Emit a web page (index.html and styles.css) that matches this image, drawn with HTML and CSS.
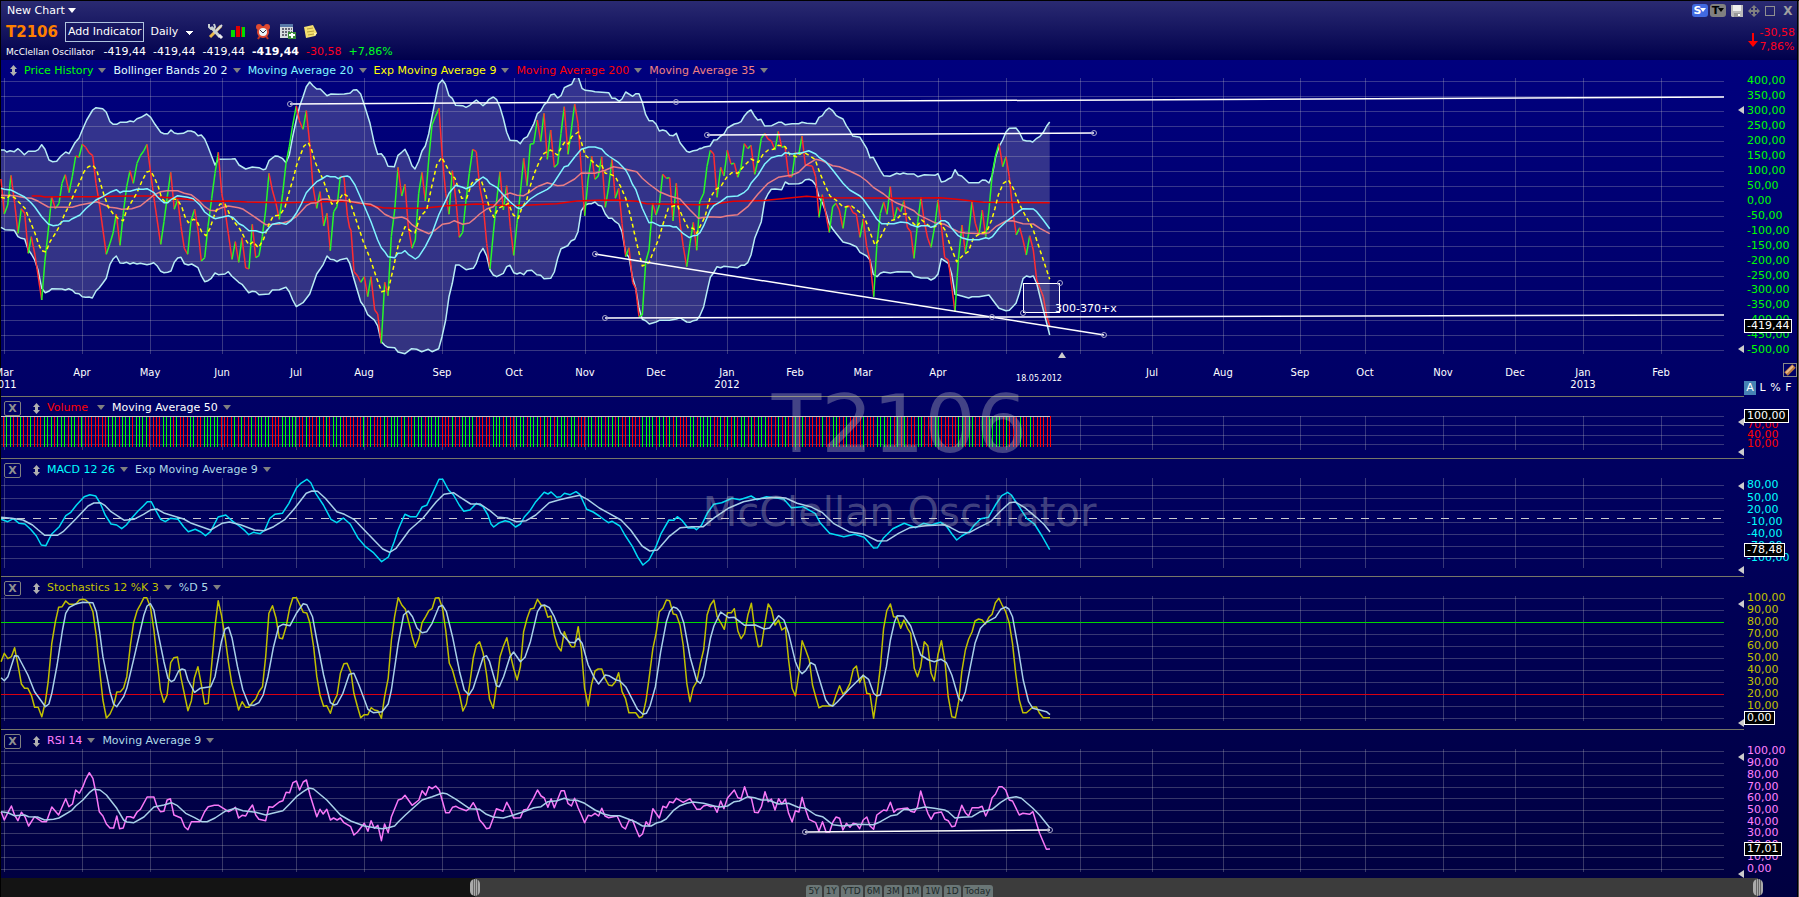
FILE: index.html
```html
<!DOCTYPE html>
<html lang="en">

<head>
    <meta charset="UTF-8">
    <meta name="viewport" content="width=device-width, initial-scale=1.0">
    <title>T2106 - McClellan Oscillator</title>
    <link rel="stylesheet" href="styles.css">
</head>

<body>
    <!-- top bar -->
    <header class="topbar">
        <div class="topbar-left">
            <button class="menu" type="button">New Chart <i class="caret light"></i></button>
            <div class="toolbar">
                <strong class="symbol">T2106</strong>
                <button class="add" type="button">Add Indicator</button>
                <select class="period" aria-label="Period">
                    <option>Daily</option>
                    <option>Weekly</option>
                </select>
                <button class="tool" type="button" aria-label="Settings">
                    <svg width="17" height="17"><path d="M3 14L14 3" stroke="#e8b84a" stroke-width="3"/><path d="M7 10L15 2" stroke="#d8dcdc" stroke-width="2"/><path d="M4 4l9 10" stroke="#c8d0d0" stroke-width="3"/><path d="M2 1v3l2 2h3l1-2-1-3" fill="none" stroke="#c8d0d0" stroke-width="2"/><path d="M12 12l3 3" stroke="#eee" stroke-width="3"/></svg>
                </button>
                <button class="tool" type="button" aria-label="Chart type">
                    <svg width="15" height="15"><path d="M0 6h4v7H0z" fill="#0d0"/><path d="M5 2h4v11H5z" fill="#e00000"/><path d="M10 3h4v10h-4z" fill="#0d0"/><path d="M10 3h1v10h-1z" fill="#e00000"/></svg>
                </button>
                <button class="tool" type="button" aria-label="Alarm">
                    <svg width="16" height="16"><circle cx="4" cy="3" r="3" fill="#e04a30"/><circle cx="12" cy="3" r="3" fill="#e04a30"/><path d="M3 15l2-3M13 15l-2-3" stroke="#c03020" stroke-width="2"/><circle cx="8" cy="8" r="5" fill="#e8f4f8" stroke="#e04a30" stroke-width="2"/><path d="M5 6l3 3 3-3" fill="none" stroke="#334"/></svg>
                </button>
                <button class="tool" type="button" aria-label="Add table">
                    <svg width="18" height="17"><path d="M1 1h13v14H1z" fill="#d8dce0"/><path d="M1 1h13v3H1z" fill="#5878a8"/><path d="M3 6h10M3 9h10M3 12h10" stroke="#667" stroke-width="2" stroke-dasharray="2 1"/><path d="M9 9h8v7H9z" fill="#3a8a3a"/><path d="M13 10v5M10 12h6" stroke="#fff" stroke-width="2"/></svg>
                </button>
                <button class="tool" type="button" aria-label="Notes">
                    <svg width="15" height="15"><path d="M1 3l9-2 4 8-2 3-9 2z" fill="#f4e070"/><path d="M4 5l6-1M4 8l7-1M5 11l6-1" stroke="#b8a040"/><path d="M14 9l-3 0 1 3z" fill="#fff6b0"/></svg>
                </button>
            </div>
            <div class="quotes">
                <span class="name">McClellan Oscillator</span>
                <span>-419,44</span>
                <span>-419,44</span>
                <span>-419,44</span>
                <b>-419,44</b>
                <span class="red">-30,58</span>
                <span class="green">+7,86%</span>
            </div>
        </div>
        <div class="topbar-right">
            <div class="window-tools">
                <button class="badge blue" type="button">S<i class="caret"></i></button>
                <button class="badge gray" type="button">T<i class="caret"></i></button>
                <button type="button" aria-label="Save"><svg width="12" height="12"><path d="M0 0h12v12H1l-1-1z" fill="#bbb"/><path d="M2 0h8v6H2z" fill="#eee"/><path d="M3 8h6v4H3z" fill="#999"/><path d="M7 9h2v2H7z" fill="#fff"/></svg></button>
                <button type="button" aria-label="Move"><svg width="12" height="12"><path d="M6 1v10M1 6h10" stroke="#808080" stroke-width="2"/><path d="M6 0l3 3H3zM6 12l3-3H3zM0 6l3-3v6zM12 6l-3-3v6z" fill="#808080"/></svg></button>
                <button type="button" aria-label="Maximize"><svg width="10" height="10"><rect x=".5" y=".5" width="9" height="9" fill="none" stroke="#909090"/></svg></button>
                <button class="close" type="button" aria-label="Close">X</button>
            </div>
            <div class="change red">
                <svg width="10" height="14"><path d="M5 0v9" stroke="#f00" stroke-width="2"/><path d="M0 8h10l-5 6z" fill="#f00"/></svg>
                <span>-30,58<br>7,86%</span>
            </div>
        </div>
    </header>

    <!-- chart panels -->
    <main class="panels">
        <div class="watermark">
            <span class="watermark-symbol">T2106</span>
            <span class="watermark-name">McClellan Oscillator</span>
        </div>

        <section class="panel">
            <div class="pane">
                <div class="legend main-legend">
                    <svg class="grip" width="9" height="11"><use href="#grip"/></svg>
                    <button class="c-price" type="button">Price History<i class="caret"></i></button>
                    <button class="c-band" type="button">Bollinger Bands 20 2<i class="caret"></i></button>
                    <button class="c-ma20" type="button">Moving Average 20<i class="caret"></i></button>
                    <button class="c-ema" type="button">Exp Moving Average 9<i class="caret"></i></button>
                    <button class="c-ma200" type="button">Moving Average 200<i class="caret"></i></button>
                    <button class="c-ma35" type="button">Moving Average 35<i class="caret"></i></button>
                </div>
                <svg class="plot plot-main" id="price"></svg>
            </div>
            <div class="axis c-price">
                <svg class="scale scale-main" id="price-scale"></svg>
                <output class="tag tag-price">-419,44</output>
                <button class="draw" type="button" aria-label="Draw"><svg width="12" height="12"><path d="M2 10L10 2" stroke="#b87840" stroke-width="5"/><path d="M2 9L9 2" stroke="#e8b888" stroke-width="2"/></svg></button>
                <div class="modes">
                    <button class="on" type="button">A</button>
                    <button type="button">L</button>
                    <button type="button">%</button>
                    <button type="button">F</button>
                </div>
            </div>
        </section>

        <section class="panel">
            <div class="pane">
                <div class="legend">
                    <button class="remove" type="button" aria-label="Remove volume">X</button>
                    <svg class="grip" width="9" height="11"><use href="#grip"/></svg>
                    <button class="c-volume wide" type="button">Volume<i class="caret"></i></button>
                    <button class="c-white" type="button">Moving Average 50<i class="caret"></i></button>
                </div>
                <svg class="plot plot-volume" id="volume"></svg>
            </div>
            <div class="axis c-volume">
                <svg class="scale" id="volume-scale"></svg>
                <output class="tag tag-volume">100,00</output>
            </div>
        </section>

        <section class="panel">
            <div class="pane">
                <div class="legend">
                    <button class="remove" type="button" aria-label="Remove MACD">X</button>
                    <svg class="grip" width="9" height="11"><use href="#grip"/></svg>
                    <button class="c-macd" type="button">MACD 12 26<i class="caret"></i></button>
                    <button class="c-signal" type="button">Exp Moving Average 9<i class="caret"></i></button>
                </div>
                <svg class="plot plot-macd" id="macd"></svg>
            </div>
            <div class="axis c-macd">
                <svg class="scale" id="macd-scale"></svg>
                <output class="tag tag-macd">-78,48</output>
            </div>
        </section>

        <section class="panel">
            <div class="pane">
                <div class="legend">
                    <button class="remove" type="button" aria-label="Remove stochastics">X</button>
                    <svg class="grip" width="9" height="11"><use href="#grip"/></svg>
                    <button class="c-stoch" type="button">Stochastics 12 %K 3<i class="caret"></i></button>
                    <button class="c-signal" type="button">%D 5<i class="caret"></i></button>
                </div>
                <svg class="plot plot-stoch" id="stoch"></svg>
            </div>
            <div class="axis c-stoch">
                <svg class="scale" id="stoch-scale"></svg>
                <output class="tag tag-stoch">0,00</output>
            </div>
        </section>

        <section class="panel">
            <div class="pane last">
                <div class="legend">
                    <button class="remove" type="button" aria-label="Remove RSI">X</button>
                    <svg class="grip" width="9" height="11"><use href="#grip"/></svg>
                    <button class="c-rsi" type="button">RSI 14<i class="caret"></i></button>
                    <button class="c-signal" type="button">Moving Average 9<i class="caret"></i></button>
                </div>
                <svg class="plot plot-rsi" id="rsi"></svg>
            </div>
            <div class="axis c-rsi">
                <svg class="scale" id="rsi-scale"></svg>
                <output class="tag tag-rsi">17,01</output>
            </div>
        </section>
    </main>

    <!-- time range -->
    <footer class="timeline">
        <div class="range">
            <button class="thumb" type="button" aria-label="Range start"></button>
            <button class="thumb end" type="button" aria-label="Range end"></button>
        </div>
        <nav class="spans">
            <button type="button">5Y</button>
            <button type="button">1Y</button>
            <button type="button">YTD</button>
            <button type="button">6M</button>
            <button type="button">3M</button>
            <button type="button">1M</button>
            <button type="button">1W</button>
            <button type="button">1D</button>
            <button type="button">Today</button>
        </nav>
    </footer>

    <svg class="symbols" width="0" height="0">
        <symbol id="grip" viewBox="0 0 9 11"><path d="M4.5 0L8 4H6v3h2L4.5 11 1 7h2V4H1z" fill="#b0b0b0"/></symbol>
    </svg>
    <script src="chart.js"></script>
</body>

</html>
```

FILE: styles.css
```css
* {
    box-sizing: border-box;
}

body {
    margin: 0;
    min-height: 100vh;
    font-family: "DejaVu Sans", Verdana, sans-serif;
    font-size: 11px;
    line-height: 14px;
    color: #fff;
    background: linear-gradient(#00007e 60px, #000040 100%);
    border-top: 1px solid #000;
    box-shadow: inset 1px 0 #000, inset -1px 0 #555, inset -2px 0 #000;
}

button,
select {
    margin: 0;
    padding: 0;
    border: 0;
    background: none;
    color: inherit;
    font: inherit;
    white-space: nowrap;
    cursor: pointer;
}

svg {
    display: block;
}

.symbols {
    position: absolute;
}

.red {
    color: #ff0020;
}

.green {
    color: #00ff20;
}

/* small down arrow after a menu label */
.caret {
    display: inline-block;
    border: 4px solid transparent;
    border-top: 5px solid #808080;
    border-bottom: 0;
}

.caret.light {
    border-top-color: #fff;
    vertical-align: 1px;
}

/* top bar */
.topbar {
    display: flex;
    justify-content: space-between;
    height: 59px;
    margin: 0 2px 0 1px;
    padding: 0 0 0 5px;
    background: linear-gradient(#2a2a72, #00004c);
}

.topbar-left {
    display: flex;
    flex-direction: column;
    align-items: flex-start;
}

.menu {
    height: 19px;
    padding-left: 1px;
}

.toolbar {
    display: flex;
    align-items: center;
    height: 23px;
}

.symbol {
    width: 59px;
    font-size: 15px;
    color: #ff8000;
}

.add {
    height: 20px;
    padding: 0 2px;
    border: 1px solid #b0c4de;
}

.period {
    appearance: none;
    width: 46px;
    height: 18px;
    margin: 0 11px 0 6px;
    background: linear-gradient(to bottom right, #fff 50%, transparent 50%) 40px 8px / 4px 4px no-repeat,
        linear-gradient(to bottom left, #fff 50%, transparent 50%) 36px 8px / 4px 4px no-repeat;
}

.period option {
    background: #00004c;
}

.tool {
    width: 24px;
}

.quotes {
    display: flex;
    gap: 7px;
    align-items: center;
    height: 17px;
    padding-top: 1px;
}

.quotes .name {
    margin-right: 2px;
    font-size: 9px;
}

.topbar-right {
    display: flex;
    flex-direction: column;
    align-items: flex-end;
}

.window-tools {
    display: flex;
    align-items: center;
    gap: 5px;
    height: 19px;
    padding-right: 3px;
}

.badge {
    height: 13px;
    width: 16px;
    border-radius: 3px;
    font-weight: bold;
    line-height: 13px;
}

.badge + .badge {
    margin: 0 0 0 -3px;
}

.badge .caret {
    border-width: 4px 3px 0;
    border-top-color: currentColor;
    vertical-align: 2px;
    margin-left: -1px;
}

.badge.blue {
    background: #4169e1;
}

.badge.gray {
    background: #808080;
    color: #000;
}

.close {
    width: 12px;
    margin-left: 2px;
    font-size: 12px;
    font-weight: bold;
    color: #a0a0a0;
}

.change {
    display: flex;
    align-items: center;
    gap: 2px;
    padding: 6px 2px 0 0;
}

/* panels */
.panels {
    position: relative;
}

.panel {
    display: grid;
    grid-template-columns: 1fr 55px;
}

.pane {
    margin-left: 1px;
    border-bottom: 1px solid #777768;
}

.pane.last {
    border-bottom: 0;
}

.legend {
    display: flex;
    align-items: center;
    height: 19px;
    padding: 3px 0 0 3px;
}

.main-legend {
    height: 18px;
    padding: 3px 0 0 8px;
}

.legend button {
    margin-right: 7px;
}

.legend .caret {
    margin-left: 5px;
    vertical-align: 1px;
}

.legend .wide .caret {
    margin-left: 9px;
}

.legend .remove {
    width: 17px;
    height: 15px;
    margin-right: 11px;
    border: 1px solid #808080;
    border-radius: 2px;
    font-weight: bold;
    line-height: 13px;
    color: #909090;
}

.grip {
    margin-right: 6px;
}

/* the plots sit on the pane's left edge and leave a margin at the right */
.plot {
    width: calc(100% - 19px);
    margin-left: -1px;
}

.plot-main { height: 318px; }
.plot-volume { height: 42px; }
.plot-macd { height: 98px; }
.plot-stoch { height: 133px; }
.plot-rsi { height: 129px; }

.axis {
    position: relative;
}

/* labels may run below the box, so the pane alone sets the panel height */
.scale {
    width: 100%;
    height: 50px;
    overflow: visible;
}

.scale-main {
    height: 303px;
}

.scale text {
    fill: currentColor;
}

.scale path {
    fill: #ccc;
}

.tag {
    position: absolute;
    left: 0;
    height: 14px;
    padding: 0 2px;
    border: 1px solid #fff;
    background: #000;
    color: #fff;
    line-height: 12px;
}

.tag-price { top: 259px; }
.tag-volume { top: 12px; }
.tag-macd { top: 84px; }
.tag-stoch { top: 134px; }
.tag-rsi { top: 112px; }

.draw {
    display: block;
    width: 14px;
    height: 14px;
    margin-left: 39px;
    border: 1px solid #888;
}

.modes {
    display: flex;
    margin-top: 4px;
}

.modes button {
    min-width: 13px;
    height: 14px;
}

.modes .on {
    min-width: 12px;
    background: #4682b4;
}

.c-price { color: #00ff00; }
.c-band { color: #e0ffff; }
.c-ma20 { color: #80f8ff; }
.c-ema { color: #ffff00; }
.c-ma200 { color: #ff0000; }
.c-ma35 { color: #f08080; }
.c-volume { color: #ff0000; }
.c-white { color: #fff; }
.c-macd { color: #00ffff; }
.c-signal { color: #add8e6; }
.c-stoch { color: #c0c000; }
.c-rsi { color: #ff80ff; }
.modes, .draw { color: #fff; }

/* name of the symbol across the panels */
.watermark {
    position: absolute;
    top: 310px;
    left: 0;
    right: 0;
    display: flex;
    flex-direction: column;
    align-items: center;
    color: rgba(204, 204, 204, .33);
    pointer-events: none;
}

.watermark-symbol {
    font-size: 81px;
    line-height: 108px;
}

.watermark-name {
    font-size: 40px;
    line-height: 68px;
}

/* lines */
.grid { stroke: rgba(204, 204, 204, .27); }
.line { fill: none; stroke-width: 1.5; stroke-linejoin: round; }
.fill { fill: rgba(204, 204, 204, .25); }
.band { stroke: #b8ecf4; }
.ma20 { stroke: #80f4ff; }
.ema { stroke: #ffff00; stroke-dasharray: 4 3; }
.ma35 { stroke: #e87c84; }
.ma200 { stroke: #e80000; }
.up { stroke: #28f828; }
.down { stroke: #ff2c30; }
.bar-up { stroke: #00ff00; }
.bar-down { stroke: #ff0000; }
.volume-ma { stroke: #ccc; }
.macd { stroke: #00dcf4; }
.signal { stroke: #a8d0e8; }
.zero { stroke: #ccc; stroke-dasharray: 8 8; }
.stoch { stroke: #c0c000; }
.upper { stroke: #00d800; }
.lower { stroke: #d80010; }
.rsi { stroke: #f878f8; }
.trend { stroke: #fff; stroke-width: 1.5; }
.handle { fill: none; stroke: #aaaacc; }
.note { fill: rgba(204, 204, 204, .15); stroke: #fff; }
.plot text { fill: #fff; }
.month { font-size: 10px; text-anchor: middle; }
.date { font-size: 8px; text-anchor: middle; }
.marker { fill: #ccc; }

/* time range */
.timeline {
    position: relative;
    height: 19px;
    margin: 0 41px 0 1px;
    background: #141414;
}

.range {
    position: relative;
    height: 19px;
    margin-left: 27%;
    background: #3c3c3c;
}

.thumb {
    position: absolute;
    top: 1px;
    left: -5px;
    width: 10px;
    height: 17px;
    border-radius: 5px;
    background: linear-gradient(90deg, transparent 3px, #666 3px 4px, transparent 4px 5px, #666 5px 6px, transparent 6px 7px, #666 7px 8px, transparent 8px), #aaa;
}

.thumb.end {
    left: auto;
    right: -5px;
}

.spans {
    position: absolute;
    left: 0;
    right: -40px;
    bottom: 0;
    display: flex;
    justify-content: center;
    gap: 2px;
}

.spans button {
    height: 12px;
    padding: 0 2px;
    border-radius: 3px 3px 0 0;
    background: #6a7676;
    color: #1c2828;
    font-size: 9px;
    line-height: 12px;
}
```

FILE: chart.js
```js
var NS = 'http://www.w3.org/2000/svg';

// first day of each month on the time axis
var months = [
    [4, 'Mar', '2011'], [82, 'Apr'], [150, 'May'], [222, 'Jun'], [296, 'Jul'], [364, 'Aug'], [442, 'Sep'],
    [514, 'Oct'], [585, 'Nov'], [656, 'Dec'], [727, 'Jan', '2012'], [795, 'Feb'], [863, 'Mar'], [938, 'Apr'],
    [1006, ''], [1080, ''], [1152, 'Jul'], [1223, 'Aug'], [1300, 'Sep'], [1365, 'Oct'], [1443, 'Nov'],
    [1515, 'Dec'], [1583, 'Jan', '2013'], [1661, 'Feb']
];

// top: where the plot starts inside its panel, rows: grid lines in the plot, labels: one for each row
var panels = {
    price: {
        top: 18, from: 0, to: 276, arrows: [50, 289],
        rows: [3, 18, 33, 48, 63, 78, 93, 108, 123, 138, 153, 168, 183, 198, 212, 227, 242, 257, 272],
        labels: ['400,00', '350,00', '300,00', '250,00', '200,00', '150,00', '100,00', '50,00', '0,00', '-50,00', '-100,00',
            '-150,00', '-200,00', '-250,00', '-300,00', '-350,00', '-400,00', '-450,00', '-500,00']
    },
    volume: { top: 19, from: 0, to: 34, arrows: [25, 55], rows: [0, 9, 19, 28], labels: ['', '70,00', '40,00', '10,00'] },
    macd: {
        top: 19, from: 0, to: 90, arrows: [27, 111], rows: [7, 20, 32, 44, 56, 68, 80],
        labels: ['80,00', '50,00', '20,00', '-10,00', '-40,00', '-70,00', '-100,00']
    },
    stoch: {
        top: 19, from: 0, to: 125, arrows: [27, 146], rows: [2, 14, 26, 38, 50, 62, 74, 86, 98, 110, 122],
        labels: ['100,00', '90,00', '80,00', '70,00', '60,00', '50,00', '40,00', '30,00', '20,00', '10,00', '']
    },
    rsi: {
        top: 19, from: 0, to: 123, arrows: [27, 144], rows: [2, 14, 26, 38, 49, 61, 73, 84, 96, 108, 120],
        labels: ['100,00', '90,00', '80,00', '70,00', '60,00', '50,00', '40,00', '30,00', '20,00', '10,00', '0,00']
    }
};

function add(id, tag, cls, attrs, text) {
    var el = document.createElementNS(NS, tag);
    if (cls) el.setAttribute('class', cls);
    for (var key in attrs) el.setAttribute(key, attrs[key]);
    if (text) el.textContent = text;
    document.getElementById(id).appendChild(el);
}

// each part is [left, top, steps per pixel across, points], points have three steps per pixel down
function read(parts) {
    var out = [];
    parts.forEach(function (part) {
        part[3].trim().split(/\s+/).forEach(function (pair) {
            var p = pair.split(',');
            var x = part[0] + p[0] / part[2];
            if (out.length && x <= out[out.length - 1][0]) return;
            out.push([Math.round(x * 10) / 10, Math.round((part[1] + p[1] / 3) * 10) / 10]);
        });
    });
    return out;
}

function line(id, cls, points) {
    add(id, 'polyline', 'line ' + cls, { points: points.join(' ') });
}

function rule(id, cls, x1, y1, x2, y2) {
    add(id, 'line', cls, { x1: x1, y1: y1, x2: x2, y2: y2 });
}

function main3(a, b, c) {
    return read([[0, -8, 3, a], [350, -8, 3, b], [700, -8, 3, c]]);
}

// data
var price = main3(
    '3,327 13,432 23,405 33,316 44,400 54,490 64,416 74,430 85,550 94,500 105,555 125,690 135,570 145,480 155,380 166,416 177,400 186,340 196,314 207,368 217,320 227,258 237,262 247,223 257,232 267,248 278,257 288,340 298,400 319,553 330,520 339,490 349,432 360,526 370,430 380,350 390,302 400,340 411,280 421,257 431,243 441,223 452,310 462,385 482,523 492,455 502,380 512,307 523,418 533,388 543,470 553,535 563,553 573,452 584,418 594,480 604,573 614,563 624,470 635,385 645,310 655,247 665,370 675,420 685,490 696,568 706,515 716,577 726,503 737,594 747,596 757,463 767,563 777,557 787,500 797,420 807,310 817,360 828,400 838,448 848,370 858,280 868,230 878,165 889,108 898,152 909,178 919,122 929,220 939,350 950,415 960,365 971,468 981,430 991,542 1001,425 1011,410 1021,319 1032,322 1042,435 1049,475',
    '3,480 12,605 23,618 32,637 43,620 53,680 63,620 74,720 83,732 94,820 104,637 114,677 124,500 134,420 144,292 155,378 165,343 175,470 186,535 196,510 206,370 216,307 226,393 236,270 246,165 256,140 267,115 277,260 287,370 297,433 307,302 317,385 328,502 338,487 348,390 358,310 368,238 379,245 389,350 399,400 410,520 420,597 430,490 440,390 450,305 460,420 470,347 481,470 491,556 501,460 511,370 521,265 531,347 541,222 551,221 562,150 572,215 582,130 592,268 602,180 613,292 623,282 633,190 643,110 654,253 664,180 674,102 684,160 694,300 704,437 714,330 725,258 735,328 745,318 755,260 766,412 776,350 786,268 796,385 806,355 816,460 827,560 837,533 848,638 857,655 867,740 877,735 887,575 897,540 908,400 918,435 928,405 938,313 949,325 959,323 969,453 979,340 990,460 1000,530 1010,590 1020,520 1030,457 1040,541 1049,395',
    '11,370 21,290 31,241 41,252 51,382 62,292 72,318 82,241 93,282 103,280 113,322 123,293 133,221 143,236 153,226 164,313 174,270 184,205 194,190 204,207 214,213 225,240 235,184 245,232 255,229 266,320 276,320 286,247 296,255 306,198 316,285 337,288 347,320 357,442 367,374 377,430 388,487 398,410 408,400 418,420 429,475 439,408 449,408 459,428 469,432 480,502 490,447 500,530 510,570 521,680 531,520 541,430 551,397 561,433 571,350 582,450 592,412 602,425 612,392 622,472 632,485 642,565 653,455 663,382 673,455 683,505 693,532 704,470 714,390 724,465 734,563 745,570 765,725 775,570 786,465 796,548 806,490 816,394 826,460 837,495 847,420 857,500 867,420 877,310 887,255 897,221 908,290 918,260 928,320 938,420 949,495 959,473 969,510 979,555 989,497 1000,540 1010,630 1020,655 1030,680 1040,740 1049,768');

var bandTop = main3(
    '3,240 13,240 20,246 30,242 43,245 54,236 63,244 73,254 85,244 105,244 115,239 125,224 135,238 147,270 158,275 170,274 182,259 197,246 207,251 225,218 237,204 247,180 260,150 278,120 288,113 308,116 319,127 330,155 340,163 350,163 360,157 380,157 390,153 401,155 411,146 423,142 440,132 452,142 465,163 482,187 492,191 503,191 513,180 523,189 533,191 550,190 563,183 573,183 584,187 594,197 604,195 614,207 624,230 645,285 655,268 695,267 705,266 717,285 737,297 757,291 777,293 789,299 797,297 807,272 825,258 835,259 848,266 858,278 868,255 878,200 889,150 899,108 909,80 919,50 929,36 939,47 950,57 961,57 981,77 993,72 1013,73 1033,72 1047,70',
    '1,69 10,60 20,59 32,72 43,105 60,160 73,220 83,253 94,251 104,264 114,289 133,290 144,256 155,247 165,238 176,260 186,287 195,297 206,274 216,243 226,228 236,192 246,140 256,90 266,42 277,30 286,42 297,77 307,85 317,106 338,107 348,112 358,107 370,97 379,90 399,107 409,99 417,88 430,81 440,89 450,112 460,145 470,187 480,211 501,212 511,221 521,206 532,200 552,160 562,131 572,123 582,105 592,95 602,75 613,72 623,84 633,77 643,53 653,48 665,43 675,22 685,22 696,55 706,61 725,63 735,65 776,68 786,85 796,85 808,94 816,87 827,66 848,79 857,71 867,71 877,97 887,134 897,152 908,152 918,162 928,183 938,180 948,183 959,196 970,197 979,190 990,218 1010,244 1018,247 1030,242 1040,241 1050,235',
    '3,236 13,231 30,228 41,210 51,209 62,198 72,192 82,174 103,162 113,160 123,155 133,138 143,126 153,120 163,137 173,150 183,148 194,168 215,167 235,157 245,157 255,164 276,161 296,161 306,157 320,160 347,161 357,142 367,137 377,122 387,114 398,122 408,136 418,142 429,147 439,167 449,182 458,198 480,202 500,235 510,263 520,262 541,301 551,317 570,319 590,310 600,313 610,309 622,312 642,312 653,320 673,314 705,316 714,311 724,336 734,334 745,327 755,322 765,299 775,315 785,318 806,338 837,338 847,330 857,331 867,339 877,315 887,260 897,230 908,210 918,186 928,175 948,174 958,187 969,210 980,213 990,213 998,216 1010,205 1020,199 1030,187 1040,168 1049,156');

var bandBottom = main3(
    '3,472 15,479 43,481 54,500 64,505 74,507 84,538 94,552 104,570 114,600 125,655 136,668 146,664 156,656 186,657 196,660 206,656 217,661 226,670 237,671 247,680 257,682 267,681 277,684 288,663 298,653 308,640 319,625 330,583 340,566 349,558 360,579 370,580 380,577 390,582 400,578 411,582 421,580 431,582 441,584 451,582 461,578 471,587 482,604 492,608 503,607 513,603 523,577 533,564 543,562 553,581 565,585 575,582 594,593 604,617 614,635 624,632 634,625 645,609 655,614 675,612 685,605 695,618 716,637 726,643 746,668 757,664 767,665 777,674 807,672 817,660 838,659 858,652 868,665 878,690 889,710 909,698 929,672 950,612 960,598 970,583 981,558 991,568 1001,569 1011,575 1021,569 1041,565 1049,580',
    '10,620 32,695 43,710 53,734 63,742 73,750 83,768 94,815 104,826 114,832 134,833 144,846 165,851 185,836 200,838 215,845 235,838 246,845 266,836 276,800 287,750 297,680 307,640 317,585 328,585 348,599 358,597 370,595 379,580 389,550 399,535 410,558 420,600 430,615 440,620 460,610 470,590 480,586 491,608 501,612 510,608 521,614 531,602 545,601 560,614 572,616 582,626 602,625 613,606 623,565 633,536 643,532 653,527 663,513 674,508 684,485 694,422 706,405 716,401 725,401 735,396 745,406 755,408 766,432 776,445 786,445 796,455 806,462 816,485 827,550 837,562 847,620 857,655 867,715 877,748 887,752 898,762 918,756 928,751 959,751 979,747 990,743 1010,756 1020,757 1030,752 1040,750 1049,738',
    '11,710 21,665 31,622 41,608 51,590 62,593 72,589 113,593 123,586 133,586 143,578 153,555 164,505 184,455 194,392 204,372 214,358 225,357 245,359 256,336 266,342 296,341 306,338 316,329 327,328 337,332 347,345 357,382 367,398 377,425 388,462 398,477 408,490 429,516 449,521 469,530 480,547 500,558 510,570 520,613 531,620 541,610 551,606 571,609 592,605 632,606 642,619 663,624 683,624 693,630 704,624 714,612 724,566 745,580 755,612 765,673 785,678 806,684 816,680 837,680 867,675 887,702 897,715 918,722 928,721 938,710 948,700 958,670 969,626 979,618 990,621 1000,618 1010,640 1020,680 1030,720 1040,760 1049,795');

var ma20 = main3(
    '3,355 13,358 33,360 54,371 74,381 94,399 105,412 125,440 145,462 160,467 175,465 190,453 207,453 217,446 240,435 257,416 288,390 308,380 330,367 349,359 360,368 370,364 390,364 411,358 430,358 441,356 462,368 472,380 482,390 492,398 503,398 513,389 533,377 563,382 580,386 600,405 614,426 630,438 645,446 665,442 685,437 700,443 717,461 730,467 747,482 767,482 787,488 797,486 807,473 817,463 838,458 858,463 873,452 889,430 904,402 919,368 935,350 950,335 965,327 981,317 991,320 1005,320 1015,326 1027,320 1042,318 1050,322',
    '15,345 43,408 63,455 83,510 94,533 104,545 114,560 134,563 144,550 155,549 165,542 175,553 186,560 196,567 206,560 226,530 246,490 266,435 277,412 287,392 297,370 307,358 317,346 338,352 348,356 368,347 379,335 399,321 410,328 420,341 440,352 460,374 480,395 501,413 511,416 521,408 541,387 562,373 592,358 602,350 613,336 643,290 654,287 674,261 694,238 716,231 735,231 755,237 766,250 776,258 806,278 827,300 837,318 847,342 857,358 877,415 897,458 908,457 928,467 959,467 970,471 979,470 1000,491 1018,503 1030,497 1040,496 1050,488',
    '11,467 31,420 41,407 62,395 82,380 113,378 133,367 143,358 153,340 174,315 194,282 214,263 235,257 245,257 256,248 276,252 306,248 326,242 347,252 357,262 377,275 398,300 429,340 449,360 480,378 490,388 510,416 530,447 545,461 582,461 602,456 622,458 632,464 653,471 663,467 683,467 693,472 704,468 724,452 734,452 745,459 755,475 775,497 785,503 806,509 837,509 857,503 867,506 877,500 897,475 918,455 938,440 958,423 969,416 1000,417 1010,425 1030,450 1049,476');

var ema9 = main3(
    '3,382 20,386 30,375 45,384 60,400 75,415 85,440 95,465 105,490 115,520 125,542 138,546 150,515 165,492 180,466 195,430 207,408 222,372 240,335 252,305 265,290 278,286 290,300 300,335 312,375 325,412 340,432 355,446 370,452 380,420 395,395 411,368 425,335 440,306 452,303 462,320 475,350 485,385 500,400 515,385 533,390 545,410 555,440 565,458 580,448 590,452 605,485 618,497 630,475 645,430 660,402 675,402 690,435 705,458 720,478 735,506 747,525 760,515 775,533 790,510 807,462 820,438 840,435 855,412 865,375 880,325 890,285 900,258 912,228 925,218 935,240 945,275 958,305 970,330 985,375 995,402 1010,400 1030,370 1045,380 1050,395',
    '20,455 40,515 60,565 80,625 95,665 115,660 130,595 145,525 165,470 185,485 195,488 210,440 230,420 245,350 260,285 275,262 290,290 300,310 315,325 335,385 350,385 365,340 380,328 395,335 405,365 420,420 432,442 445,415 460,408 475,400 490,435 505,445 515,415 530,390 540,350 555,305 570,270 582,250 602,240 622,255 635,230 645,215 655,222 665,200 685,186 695,220 705,255 720,268 745,290 755,285 766,310 780,312 796,320 812,350 827,385 842,440 860,520 877,588 897,578 910,545 925,510 940,460 955,415 970,408 982,405 1000,445 1015,475 1030,475 1040,490 1050,470',
    '15,440 30,385 45,360 62,350 80,322 95,308 113,310 130,290 153,267 175,277 190,252 205,240 220,238 235,226 256,230 270,255 290,260 310,246 330,258 345,268 360,310 375,345 390,378 410,392 430,412 455,408 470,420 490,435 500,460 515,500 525,525 540,505 555,475 570,452 590,448 605,432 620,432 635,455 650,470 665,450 690,470 705,470 720,458 735,480 750,525 770,575 790,555 805,545 820,505 840,490 860,485 875,450 885,415 895,375 910,340 925,330 940,355 955,395 975,435 990,460 1000,480 1015,525 1030,570 1049,628');

var ma35 = main3(
    '3,376 45,377 75,383 94,385 115,394 145,411 217,412 240,405 290,395 312,404 330,412 349,414 365,418 395,416 421,408 441,392 462,375 482,365 500,362 533,362 553,370 573,374 594,390 614,410 630,421 645,422 665,413 685,408 716,413 730,418 757,436 797,464 838,462 868,453 889,440 919,407 932,400 950,398 965,388 981,387 1000,392 1021,390 1040,392',
    '30,399 63,403 83,414 104,433 130,445 155,441 170,447 186,464 206,478 237,491 256,480 277,463 297,460 313,452 338,463 358,459 375,445 389,432 410,417 430,410 460,377 480,369 501,376 521,377 541,365 562,350 592,338 623,347 640,346 674,327 694,309 735,310 766,301 790,290 816,295 847,302 860,305 877,325 897,342 928,365 959,378 990,387 1020,420 1045,445',
    '25,440 62,442 82,437 113,434 143,410 174,372 204,340 235,322 276,315 296,307 316,287 347,268 367,272 398,287 418,290 449,303 480,318 500,333 520,352 551,372 571,388 592,400 612,408 642,422 653,433 704,458 734,463 755,475 775,485 796,489 850,491 867,488 887,470 918,453 938,452 969,461 1000,462 1020,475 1049,491');

var ma200 = main3(
    '95,378 120,378 135,381 170,380 270,380 400,378 460,378 490,382 520,384 560,388 600,392 640,394 690,393 740,396 860,398 940,396 1040,394',
    '40,402 65,407 100,413 130,415 220,415 290,407 380,402 480,407 540,405 620,401 680,393 740,391 800,390 860,394 890,401 1048,404',
    '60,400 100,394 200,391 320,379 370,383 500,384 600,385 720,383 770,388 850,397 1049,398');

var macd = read([
    [0, -88, 2.613, '3,388 20,395 35,386 50,400 65,402 80,418 95,438 108,465 120,467 135,432 155,410 172,377 185,367 200,345 220,320 235,314 250,318 262,340 275,375 290,402 305,405 318,416 330,405 345,383 360,364 375,347 385,335 395,335 405,357 420,388 432,395 445,385 465,388 480,410 492,425 510,418 525,426 537,437 550,425 570,381 590,375 605,391 625,408 640,422 650,434 662,427 680,431 692,420 705,385 718,373 738,370 755,340 775,293 785,281 802,268 812,278 825,310 845,345 865,388 880,398 897,384 915,402 935,443 955,470 975,487 997,515 1015,501 1030,455 1040,420 1058,373 1072,380 1088,380 1103,351 1115,346 1130,310 1147,268 1157,268 1172,300 1185,315 1200,345 1212,364 1228,360 1245,340 1262,350 1275,375 1283,402 1290,411 1305,398 1320,392 1332,396 1347,411 1360,402 1370,381 1385,362 1400,335 1422,307 1432,312 1440,306 1455,322 1465,320 1475,310 1490,314 1505,305 1515,313 1533,358 1550,366 1566,378'],
    [600, -98, 2.613, '12,420 22,428 32,424 52,438 65,465 85,500 98,530 112,555 128,540 145,503 160,460 180,420 193,421 202,410 215,422 230,444 245,443 252,449 265,436 280,400 297,373 318,368 330,362 345,355 365,359 395,348 410,359 435,350 480,357 500,383 530,380 562,400 575,428 600,460 637,470 665,463 690,472 715,504 725,503 740,475 765,446 795,430 825,443 845,430 865,435 890,427 905,438 920,463 932,480 945,468 965,455 978,435 995,416 1015,412 1035,372 1050,347 1065,337 1075,345 1095,380 1115,415 1135,432 1155,468 1175,509']
]);

var macdSignal = read([
    [0, -88, 2.613, '3,382 30,385 60,390 85,405 100,420 117,436 150,436 165,425 200,385 230,348 245,339 262,338 275,347 290,365 325,391 350,388 375,373 395,359 410,357 430,370 460,380 480,387 500,400 550,420 580,400 600,396 630,405 665,420 690,422 715,410 745,388 770,355 800,310 815,303 830,304 850,325 880,365 900,373 925,388 960,430 1000,477 1018,487 1035,475 1070,420 1105,385 1140,335 1160,313 1185,308 1200,320 1230,342 1255,342 1280,362 1300,381 1325,384 1350,395 1375,392 1400,375 1435,338 1460,330 1490,322 1515,316 1535,328 1566,354'],
    [600, -98, 2.613, '20,398 55,420 80,450 110,498 130,513 150,510 180,470 210,443 240,440 270,440 300,412 335,385 375,365 410,357 460,352 485,354 515,370 550,380 580,397 610,430 650,455 690,463 725,483 750,482 780,460 810,443 850,437 900,434 915,442 940,457 965,458 990,442 1020,425 1045,395 1070,368 1085,366 1110,383 1140,412 1160,433 1176,456']
]);

var stoch = read([
    [0, -26, 2.8, '3,275 12,250 22,266 32,260 41,233 52,295 60,342 69,355 78,355 88,376 97,412 107,412 117,440 127,395 135,335 145,220 155,155 164,112 174,110 184,93 194,103 212,103 222,90 232,88 240,90 250,100 260,125 270,200 279,300 288,390 298,444 308,432 318,408 327,366 337,365 346,354 355,320 365,225 374,158 384,122 393,104 403,83 411,83 421,110 431,180 440,270 449,360 459,397 468,375 478,278 487,263 497,261 507,325 517,375 526,422 536,392 544,325 554,290 564,345 573,402 583,400 593,280 602,170 611,92 620,135 630,200 640,280 649,340 659,380 668,420 678,395 688,412 697,412 707,397 716,387 725,365 735,350 744,260 753,130 763,107 773,145 782,204 791,206 801,170 811,115 820,83 830,83 840,105 849,127 859,129 868,160 878,230 887,320 896,375 906,409 915,407 925,430 934,397 944,375 953,310 963,281 972,280 983,310 991,370 1001,410 1010,443 1020,434 1030,434 1039,413 1048,420 1058,422 1068,445 1077,380 1087,325 1096,210 1105,140 1115,83 1125,105 1135,118 1144,155 1154,200 1163,232 1173,205 1182,158 1192,140 1201,122 1210,116 1219,84 1229,83 1239,115 1248,180 1258,280 1267,300 1277,340 1287,375 1296,423 1306,402 1315,345 1325,265 1334,225 1343,215 1353,250 1362,310 1371,388 1381,415 1390,350 1400,260 1409,230 1419,203 1428,250 1438,295 1448,330 1457,290 1466,185 1476,145 1485,117 1495,115 1505,88 1515,105 1524,108 1534,142'],
    [550, -26, 2.8, '3,138 12,195 21,228 31,243 40,185 50,212 60,230 69,230 79,170 88,240 97,355 107,408 116,345 126,303 135,297 145,297 154,325 164,345 174,347 183,335 192,308 202,365 211,385 221,428 240,428 250,443 259,440 269,390 278,320 288,235 297,190 306,125 316,115 326,90 335,92 345,132 354,134 364,165 373,225 383,340 392,395 401,353 411,335 421,280 430,240 440,135 449,105 459,90 468,140 478,158 488,178 497,128 508,128 516,116 526,183 535,206 545,190 554,135 564,100 573,175 583,230 592,228 602,158 611,102 620,117 630,165 640,150 649,180 659,172 668,270 678,355 687,378 697,310 706,212 716,240 726,270 735,345 744,380 753,413 763,408 791,408 801,375 811,347 820,372 830,362 840,340 849,298 858,288 867,338 877,315 887,370 896,372 906,445 915,380 925,290 934,175 943,122 953,102 962,140 972,142 982,175 991,150 1001,175 1010,190 1020,295 1029,320 1038,290 1048,215 1058,228 1067,310 1076,333 1086,255 1096,212 1106,275 1115,380 1125,440 1135,443 1144,395 1153,305 1163,240 1172,208 1182,185 1190,153 1200,147 1210,150 1219,162 1229,142 1238,133 1247,98 1257,85 1266,105 1276,125 1286,160 1295,220 1304,310 1314,390 1324,428 1334,428 1343,420 1352,411 1362,411 1371,430 1381,443 1400,443']
]);

var stochSignal = read([
    [0, -26, 2.8, '3,323 12,332 22,320 41,257 50,258 78,315 97,365 127,410 137,402 145,370 160,285 175,180 184,130 194,112 212,102 232,97 260,98 270,125 279,185 288,260 308,365 318,402 327,410 346,380 355,355 375,265 403,135 412,108 421,101 431,120 440,175 459,275 470,325 480,335 488,330 500,303 510,297 518,300 526,330 545,367 560,355 590,350 602,320 620,215 630,177 640,172 650,205 665,290 680,360 697,405 710,406 725,398 737,375 750,320 765,235 780,170 792,163 812,167 830,130 849,101 859,104 875,140 887,210 906,315 925,398 935,405 944,402 960,370 978,313 991,310 1005,345 1030,418 1045,428 1070,425 1087,402 1096,360 1115,220 1130,135 1143,123 1155,140 1168,175 1182,188 1195,185 1210,160 1229,110 1239,106 1250,125 1267,200 1287,305 1300,360 1313,375 1325,355 1353,262 1362,257 1371,275 1390,347 1398,350 1410,320 1428,260 1438,246 1457,275 1470,262 1485,215 1505,125 1515,108 1524,105 1538,113'],
    [550, -26, 2.8, '12,140 30,188 55,217 69,218 79,205 90,220 107,285 125,325 136,342 155,315 165,317 185,330 195,332 212,350 245,418 260,433 270,430 280,408 295,350 310,245 326,155 335,125 345,111 355,115 364,125 375,160 392,260 411,332 421,340 430,318 449,205 459,168 478,126 500,143 516,142 545,166 575,165 600,177 615,174 640,137 655,150 668,190 687,275 697,300 706,311 716,302 730,278 742,285 755,330 772,390 782,404 792,408 805,395 840,355 877,316 892,328 906,370 915,378 925,374 942,290 953,210 965,155 972,137 990,138 1010,168 1038,255 1060,270 1076,275 1095,268 1110,278 1125,315 1144,385 1153,393 1163,365 1190,220 1205,175 1220,158 1247,142 1262,118 1276,111 1285,117 1295,140 1310,230 1325,330 1340,395 1352,415 1390,425 1400,434']
]);

var rsi = read([
    [0, -179, 2.8, '3,725 12,750 22,728 32,708 41,735 50,752 60,727 70,740 80,768 97,740 117,755 130,755 145,711 164,735 184,686 193,710 203,702 212,660 222,670 232,650 240,628 250,608 260,625 270,675 278,725 288,738 298,762 308,774 318,774 327,738 335,776 345,774 355,740 365,740 374,744 384,726 393,718 412,681 431,681 440,710 449,725 459,724 468,690 477,686 487,735 507,744 517,770 526,779 536,755 560,755 573,725 583,710 600,706 612,706 640,725 649,720 659,712 668,744 678,736 688,738 697,720 707,705 716,735 725,748 744,752 753,710 763,712 782,696 792,692 801,667 811,668 820,638 830,633 839,660 849,636 858,630 868,675 887,740 896,718 905,732 915,718 925,750 934,744 944,750 953,744 963,758 982,770 991,795 1001,786 1020,760 1030,784 1039,752 1048,775 1058,766 1068,812 1077,762 1087,788 1096,740 1115,690 1125,686 1134,676 1154,706 1173,690 1182,662 1192,676 1201,650 1210,656 1220,648 1230,660 1248,728 1258,728 1267,712 1277,709 1287,715 1306,722 1315,715 1325,698 1334,715 1343,750 1353,762 1362,776 1371,774 1381,745 1390,716 1409,724 1419,697 1428,715 1438,744 1457,743 1466,720 1476,718 1495,682 1505,660 1515,678 1524,684 1534,712'],
    [550, -179, 2.8, '3,686 12,713 31,662 40,662 50,700 60,708 69,685 79,714 88,735 97,758 107,736 116,738 126,730 136,738 145,715 154,738 164,743 188,738 202,770 211,777 221,752 231,750 240,775 250,800 259,792 269,755 278,768 288,716 306,744 316,709 326,713 335,695 345,698 354,685 373,697 392,686 411,718 421,718 430,708 440,705 449,710 459,708 468,727 478,693 487,716 497,684 516,660 526,683 535,686 545,650 554,680 564,685 573,727 583,728 592,710 602,665 611,695 620,687 630,720 640,686 649,702 659,687 668,730 678,756 687,722 697,726 706,682 716,720 725,748 744,758 753,784 763,755 773,786 783,786 792,756 801,741 811,745 820,780 830,760 840,772 849,760 858,762 867,776 877,750 887,741 896,768 906,778 915,735 925,727 934,720 943,722 953,697 963,727 972,718 1001,714 1010,724 1020,727 1029,710 1038,663 1048,700 1058,730 1067,748 1076,730 1096,726 1106,748 1115,752 1125,770 1134,768 1153,706 1163,728 1172,738 1182,713 1200,713 1210,709 1220,738 1229,718 1238,683 1247,673 1257,650 1266,650 1276,660 1286,690 1295,693 1314,735 1324,730 1343,733 1352,725 1371,790 1390,838 1400,837']
]);

var rsiAverage = read([
    [0, -179, 2.8, '3,725 22,728 41,737 69,735 80,740 105,741 125,750 150,748 165,744 200,722 212,708 232,690 250,668 262,658 280,660 298,675 327,715 346,750 355,756 375,758 403,741 431,711 459,705 480,698 497,707 520,730 545,743 565,755 580,755 602,744 630,724 659,715 680,722 716,727 744,735 763,730 792,722 811,702 830,680 849,665 865,654 878,657 915,690 953,735 982,753 1020,768 1050,773 1070,776 1087,773 1105,768 1115,756 1135,735 1163,708 1182,690 1210,680 1239,669 1250,671 1277,688 1315,716 1343,718 1362,733 1381,741 1409,744 1438,735 1466,725 1495,713 1515,710 1534,695'],
    [550, -179, 2.8, '20,692 40,685 55,690 75,691 97,700 126,720 150,732 170,737 195,737 221,748 240,756 259,768 283,768 300,758 310,756 325,747 345,722 364,707 383,700 401,696 430,700 460,708 475,711 497,708 516,695 530,693 554,680 573,683 592,690 611,690 640,702 668,700 695,712 716,715 744,735 763,740 792,764 820,768 860,763 905,764 925,755 955,737 972,734 991,718 1010,720 1050,711 1076,715 1105,720 1115,725 1134,744 1153,742 1182,740 1205,725 1238,718 1262,697 1280,685 1305,680 1320,685 1352,715 1371,735 1400,774']
]);

// Bollinger area goes under the grid
add('price', 'polygon', 'fill', { points: bandTop.concat(bandBottom.slice().reverse()).join(' ') });

// grid and scales
for (var id in panels) {
    var panel = panels[id];
    panel.rows.forEach(function (y, i) {
        rule(id, 'grid', 1, y + .5, '100%', y + .5);
        if (panel.labels[i]) add(id + '-scale', 'text', '', { x: 3, y: y + panel.top + 3 }, panel.labels[i]);
    });
    months.forEach(function (m) {
        rule(id, 'grid', m[0] + .5, panel.from, m[0] + .5, panel.to);
    });
    panel.arrows.forEach(function (y) {
        add(id + '-scale', 'path', '', { d: 'M-6 ' + y + 'l6 -4v8z' });
    });
}

// price panel
line('price', 'band', bandTop);
line('price', 'band', bandBottom);
for (var i = 1; i < price.length; i++) {
    line('price', price[i][1] < price[i - 1][1] ? 'up' : 'down', [price[i - 1], price[i]]);
}
line('price', 'ma200', ma200);
line('price', 'ma35', ma35);
line('price', 'ema', ema9);
line('price', 'ma20', ma20);

// trend lines with their handles
rule('price', 'trend', 290, 26, 676, 24);
rule('price', 'trend', 676, 24, '100%', 19);
rule('price', 'trend', 707, 57, 1094, 55);
rule('price', 'trend', 595, 176, 1104, 257);
rule('price', 'trend', 605, 240, 992, 239);
rule('price', 'trend', 992, 239, '100%', 237);
add('price', 'rect', 'note', { x: 1023.5, y: 205.5, width: 36, height: 29 });
[[290, 26], [676, 24], [707, 57], [1094, 55], [595, 176], [1104, 257], [605, 240], [992, 239], [1060, 205], [1023, 235]].forEach(function (h) {
    add('price', 'circle', 'handle', { cx: h[0], cy: h[1], r: 2.5 });
});
add('price', 'text', '', { x: 1055, y: 234 }, '300-370+x');

months.forEach(function (m) {
    add('price', 'text', 'month', { x: m[0], y: 298 }, m[1]);
    if (m[2]) add('price', 'text', 'month', { x: m[0], y: 310 }, m[2]);
});
add('price', 'text', 'date', { x: 1039, y: 303 }, '18.05.2012');
add('price', 'path', 'marker', { d: 'M1062 274l4 6h-8z' });

// volume bars take the colour of the day's move
var k = 1;
for (var n = 0; n < 309; n++) {
    var x = 3 + n * 3.4;
    while (k < price.length - 1 && price[k][0] < x - 1) k++;
    var bx = Math.round(x) + .5;
    rule('volume', price[k][1] < price[k - 1][1] ? 'bar-up' : 'bar-down', bx, 0, bx, 31);
}
rule('volume', 'volume-ma', 1, .5, 1050, .5);

// oscillators
rule('macd', 'zero', 1, 40.5, '100%', 40.5);
line('macd', 'macd', macd);
line('macd', 'signal', macdSignal);

rule('stoch', 'upper', 1, 26.5, '100%', 26.5);
rule('stoch', 'lower', 1, 98.5, '100%', 98.5);
line('stoch', 'stoch', stoch);
line('stoch', 'signal', stochSignal);

line('rsi', 'rsi', rsi);
line('rsi', 'signal', rsiAverage);
rule('rsi', 'trend', 805, 83, 1050, 81);
add('rsi', 'circle', 'handle', { cx: 805, cy: 83, r: 2.5 });
add('rsi', 'circle', 'handle', { cx: 1050, cy: 81, r: 2.5 });
```
